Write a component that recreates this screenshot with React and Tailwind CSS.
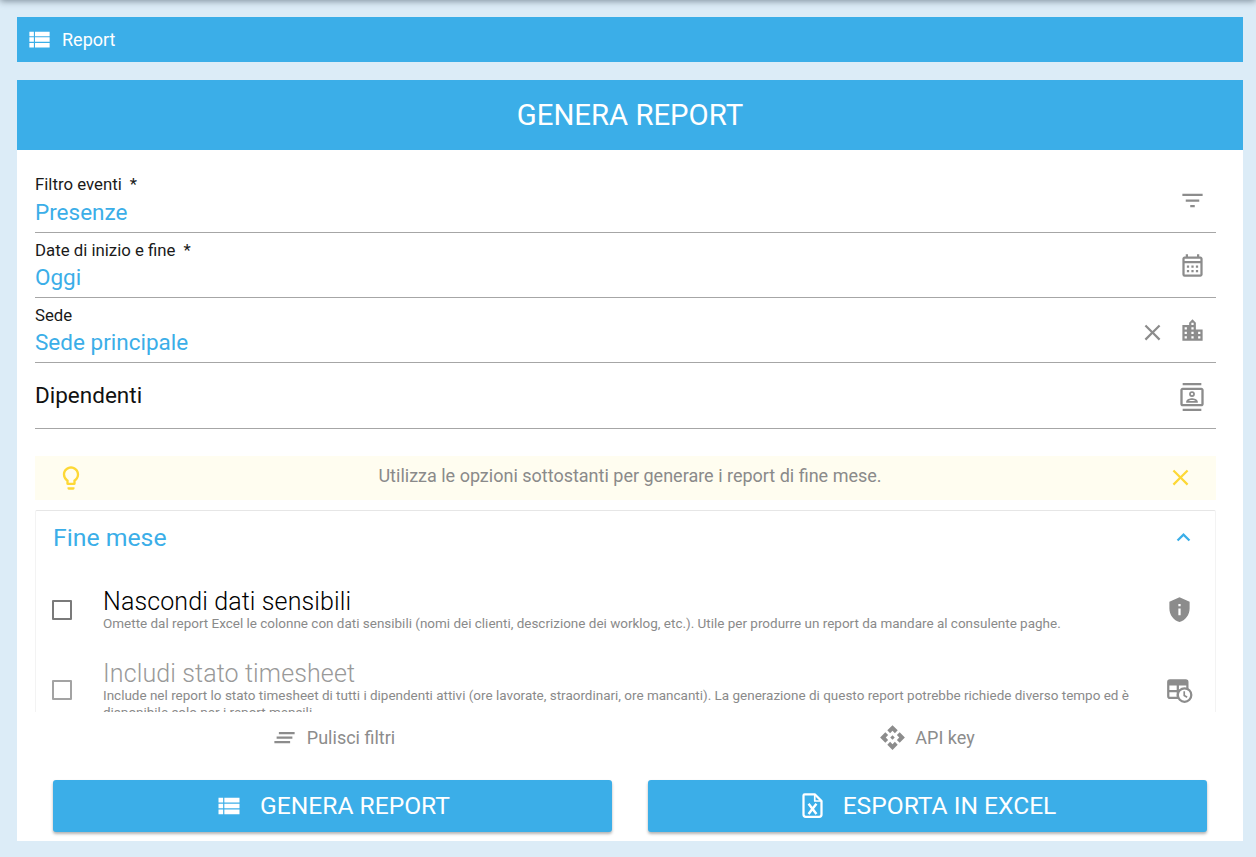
import {
  MdViewList, MdFilterList, MdOutlineCalendarMonth, MdLocationCity, MdOutlineContacts, MdOutlineLightbulb,
  MdClose, MdExpandLess, MdPrivacyTip, MdClearAll, MdApi,
} from 'react-icons/md';

function TimesheetIcon({ className }) {
  return (
    <svg className={className} viewBox="0 0 24 24" fill="none" stroke="currentColor" strokeWidth="2">
      <rect x="2" y="3" width="17" height="15.5" rx="1.5" />
      <path d="M2 5.5h17" strokeWidth="4" />
      <path d="M10.5 6v12M2 12.5h17" />
      <circle cx="16.5" cy="16" r="6" fill="white" />
      <path d="M16.2 12.6v3.8l2.6 1.6" strokeWidth="1.5" />
    </svg>
  );
}

function ExcelIcon({ className }) {
  return (
    <svg className={className} viewBox="0 0 24 24" fill="none" stroke="currentColor" strokeWidth="2" strokeLinejoin="round">
      <path d="M5 2h9l6 6v12a2 2 0 0 1-2 2H6a2 2 0 0 1-2-2V3a1 1 0 0 1 1-1Z" />
      <path d="M14 2v6h6" strokeWidth="1.5" />
      <path d="m8.5 10.5 7 9M15.5 10.5l-7 9" strokeWidth="2.2" />
    </svg>
  );
}

function Field({ label, required, value, icon, clear }) {
  return (
    <div className="flex h-[65.3px] items-end border-b border-[#a6a6a6] pb-[6px]">
      <div className="min-w-0 flex-1">
        <div className="text-[16.8px] leading-[20px] text-[#1a1a1a]">
          {label}
          {required && <span className="ml-[8px]">*</span>}
        </div>
        <div className="mt-[3.5px] text-[22.5px] leading-[28px] text-[#3baee8]">{value}</div>
      </div>
      {clear && <MdClose className="mb-[10px] mr-[13px] h-[27px] w-[27px] text-[#8c8c8c]" />}
      <div className="mb-[12px] mr-[10px] text-[#8c8c8c]">{icon}</div>
    </div>
  );
}

function Option({ title, desc, icon, disabled }) {
  return (
    <div className="flex items-center">
      <div className={`ml-[16px] h-[20px] w-[20px] shrink-0 rounded-[1px] border-[2.5px] ${disabled ? 'border-[#a3a3a3]' : 'border-[#7a7a7a]'}`} />
      <div className="ml-[31px] min-w-0 flex-1">
        <div className={`text-[25px] font-light leading-[27px] tracking-[0.12px] ${disabled ? 'text-[#999]' : 'text-black'}`}>{title}</div>
        <div className="text-[13.48px] leading-[16.5px] text-[#8a8a8a]">{desc}</div>
      </div>
      <div className="ml-[24px] mr-[22px] text-[#8c8c8c]">{icon}</div>
    </div>
  );
}

export default function App() {
  return (
    <div className="relative flex h-[857px] flex-col overflow-hidden bg-[#dcecf7] pb-[16px] pl-[17px] pr-[13px] pt-[17px] font-['Roboto',sans-serif]">
      <div className="absolute inset-x-0 top-[-10px] h-[10px] shadow-[0_1px_7px_rgba(40,55,70,0.55)]" />

      <div className="flex h-[45px] shrink-0 items-center bg-[#3baee8] pl-[9px] text-white">
        <MdViewList className="h-[27px] w-[27px]" />
        <span className="ml-[9px] text-[18px]">Report</span>
      </div>

      <div className="mt-[18px] flex min-h-0 flex-1 flex-col bg-white">
        <div className="flex h-[70px] shrink-0 items-center justify-center bg-[#3baee8] pt-[2px] text-[29.3px] text-white">GENERA REPORT</div>

        <div className="shrink-0 pl-[18px] pr-[27px] pt-[17.5px]">
          <Field label="Filtro eventi" required value="Presenze" icon={<MdFilterList className="h-[27px] w-[27px]" />} />
          <Field label="Date di inizio e fine" required value="Oggi" icon={<MdOutlineCalendarMonth className="h-[27px] w-[27px]" />} />
          <Field label="Sede" value="Sede principale" clear icon={<MdLocationCity className="h-[27px] w-[27px]" />} />
          <div className="flex h-[65.4px] items-center border-b border-[#a6a6a6]">
            <div className="flex-1 text-[22.5px] text-[#111]">Dipendenti</div>
            <MdOutlineContacts className="mr-[10px] mt-[2px] h-[28px] w-[28px] text-[#8c8c8c]" />
          </div>

          <div className="mt-[27px] flex h-[44px] items-center bg-[#fffdf0] pl-[22px] pr-[22px]">
            <MdOutlineLightbulb className="h-[28px] w-[28px] text-[#fdd835]" />
            <div className="ml-[8px] flex-1 pb-[5px] text-center text-[18px] text-[#8a8a8a]">Utilizza le opzioni sottostanti per generare i report di fine mese.</div>
            <MdClose className="h-[27px] w-[27px] text-[#fdd835]" />
          </div>

          <div className="mt-[10px] h-[202px] overflow-hidden rounded-t-[2px] border-x border-t border-x-[#f3f3f3] border-t-[#e6e6e6]">
            <div className="flex h-[54px] items-center pl-[17px] pr-[18px] text-[#3baee8]">
              <span className="flex-1 text-[24.8px]">Fine mese</span>
              <MdExpandLess className="h-[27px] w-[27px]" />
            </div>
            <div className="mt-[23px] flex flex-col gap-[29px]">
              <Option
                title="Nascondi dati sensibili"
                desc="Omette dal report Excel le colonne con dati sensibili (nomi dei clienti, descrizione dei worklog, etc.). Utile per produrre un report da mandare al consulente paghe."
                icon={<MdPrivacyTip className="h-[27px] w-[27px]" />}
              />
              <Option
                disabled
                title="Includi stato timesheet"
                desc="Include nel report lo stato timesheet di tutti i dipendenti attivi (ore lavorate, straordinari, ore mancanti). La generazione di questo report potrebbe richiede diverso tempo ed è disponibile solo per i report mensili."
                icon={<TimesheetIcon className="h-[27px] w-[27px]" />}
              />
            </div>
          </div>
        </div>

        <div className="flex h-[50px] shrink-0 pt-[2px] text-[18px] text-[#8c8c8c]">
          <div className="flex flex-1 items-center justify-center pl-[19px]">
            <MdClearAll className="h-[27px] w-[27px]" />
            <span className="ml-[9px]">Pulisci filtri</span>
          </div>
          <div className="flex flex-1 items-center justify-center pr-[19px]">
            <MdApi className="h-[27px] w-[27px]" />
            <span className="ml-[9px]">API key</span>
          </div>
        </div>

        <div className="mt-[18px] flex shrink-0 gap-[36px] px-[36px]">
          <button type="button" className="flex h-[52px] flex-1 items-center justify-center rounded-[3px] bg-[#3baee8] text-[24.6px] text-white shadow-[0_2px_3px_rgba(0,0,0,0.3)]">
            <MdViewList className="h-[28px] w-[28px]" />
            <span className="ml-[17px] pt-[1px]">GENERA REPORT</span>
          </button>
          <button type="button" className="flex h-[52px] flex-1 items-center justify-center rounded-[3px] bg-[#3baee8] text-[24.6px] text-white shadow-[0_2px_3px_rgba(0,0,0,0.3)]">
            <ExcelIcon className="h-[27px] w-[27px]" />
            <span className="ml-[17px] pt-[1px]">ESPORTA IN EXCEL</span>
          </button>
        </div>
      </div>
    </div>
  );
}
